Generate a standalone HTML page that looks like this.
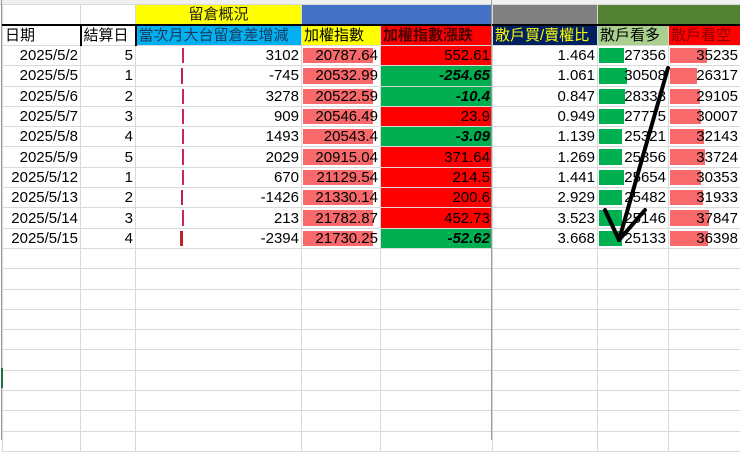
<!DOCTYPE html><html><head><meta charset="utf-8"><style>
body{margin:0;width:740px;height:440px;overflow:hidden;background:#fff;font-family:"Liberation Sans","Noto Sans CJK TC",sans-serif;position:relative}
table{position:absolute;left:2px;top:4px;border-collapse:collapse;table-layout:fixed;width:738px}
td{border:1px solid #d9d9d9;padding:0 2px;height:19px;font-size:15px;white-space:nowrap;overflow:hidden;position:relative;text-align:right;line-height:19px}
tr.d td{height:19.3px}
.h td{text-align:left;font-size:15px}
.bar{position:absolute;left:1px;top:2px;bottom:2px}
.t{position:relative}
i{font-style:italic;font-weight:bold}
</style></head><body>
<div style="position:absolute;left:0;top:0;width:740px;height:4px;background:#f0f0f0;border-bottom:1px solid #ccc"></div>
<table>
<colgroup><col style="width:78px"><col style="width:55px"><col style="width:166px"><col style="width:79px"><col style="width:112px"><col style="width:105px"><col style="width:71px"><col style="width:72px"></colgroup>
<tr class="h"><td></td><td></td><td style="background:#ffff00;text-align:center;color:#222">留倉概況</td><td colspan="2" style="background:#4472c4"></td><td style="background:#808080"></td><td colspan="2" style="background:#548235"></td></tr>
<tr class="h" style="border-top:2px solid #000"><td style="border-right:2px solid #000;border-top:2px solid #000">日期</td><td style="border-right:2px solid #000;border-top:2px solid #000">結算日</td><td style="background:#00b0f0;color:#1a3a5a;border-top:2px solid #000">當次月大台留倉差增減</td><td style="background:#ffff00;border-top:2px solid #000">加權指數</td><td style="background:#ff0000;color:#400;font-weight:bold;border-top:2px solid #000">加權指數漲跌</td><td style="background:#002060;color:#ffff00;border-top:2px solid #000">散戶買/賣權比</td><td style="background:#a9d08e;border-top:2px solid #000">散戶看多</td><td style="background:#ff0000;color:#800;border-top:2px solid #000">散戶看空</td></tr>
<tr class="d"><td>2025/5/2</td><td>5</td><td><div class="bar" style="left:46px;width:2px;background:#d0206a"></div>3102</td><td><div class="bar" style="width:70px;background:#f8696b"></div><span class="t">20787.64</span></td><td style="background:#ff0000">552.61</td><td>1.464</td><td><div class="bar" style="width:25px;background:#00b050"></div><span class="t">27356</span></td><td><div class="bar" style="width:37px;background:#f8696b"></div><span class="t">35235</span></td></tr>
<tr class="d"><td>2025/5/5</td><td>1</td><td><div class="bar" style="left:45px;width:2px;background:#c0204a"></div>-745</td><td><div class="bar" style="width:70px;background:#f8696b"></div><span class="t">20532.99</span></td><td style="background:#00b050"><i>-254.65</i></td><td>1.061</td><td><div class="bar" style="width:28px;background:#00b050"></div><span class="t">30508</span></td><td><div class="bar" style="width:27px;background:#f8696b"></div><span class="t">26317</span></td></tr>
<tr class="d"><td>2025/5/6</td><td>2</td><td><div class="bar" style="left:46px;width:2px;background:#d0206a"></div>3278</td><td><div class="bar" style="width:70px;background:#f8696b"></div><span class="t">20522.59</span></td><td style="background:#00b050"><i>-10.4</i></td><td>0.847</td><td><div class="bar" style="width:26px;background:#00b050"></div><span class="t">28333</span></td><td><div class="bar" style="width:30px;background:#f8696b"></div><span class="t">29105</span></td></tr>
<tr class="d"><td>2025/5/7</td><td>3</td><td><div class="bar" style="left:46px;width:2px;background:#d0206a"></div>909</td><td><div class="bar" style="width:70px;background:#f8696b"></div><span class="t">20546.49</span></td><td style="background:#ff0000">23.9</td><td>0.949</td><td><div class="bar" style="width:25px;background:#00b050"></div><span class="t">27775</span></td><td><div class="bar" style="width:31px;background:#f8696b"></div><span class="t">30007</span></td></tr>
<tr class="d"><td>2025/5/8</td><td>4</td><td><div class="bar" style="left:46px;width:2px;background:#d0206a"></div>1493</td><td><div class="bar" style="width:70px;background:#f8696b"></div><span class="t">20543.4</span></td><td style="background:#00b050"><i>-3.09</i></td><td>1.139</td><td><div class="bar" style="width:23px;background:#00b050"></div><span class="t">25321</span></td><td><div class="bar" style="width:34px;background:#f8696b"></div><span class="t">32143</span></td></tr>
<tr class="d"><td>2025/5/9</td><td>5</td><td><div class="bar" style="left:46px;width:2px;background:#d0206a"></div>2029</td><td><div class="bar" style="width:70px;background:#f8696b"></div><span class="t">20915.04</span></td><td style="background:#ff0000">371.64</td><td>1.269</td><td><div class="bar" style="width:23px;background:#00b050"></div><span class="t">25356</span></td><td><div class="bar" style="width:35px;background:#f8696b"></div><span class="t">33724</span></td></tr>
<tr class="d"><td>2025/5/12</td><td>1</td><td><div class="bar" style="left:46px;width:2px;background:#d0206a"></div>670</td><td><div class="bar" style="width:70px;background:#f8696b"></div><span class="t">21129.54</span></td><td style="background:#ff0000">214.5</td><td>1.441</td><td><div class="bar" style="width:25px;background:#00b050"></div><span class="t">25654</span></td><td><div class="bar" style="width:31px;background:#f8696b"></div><span class="t">30353</span></td></tr>
<tr class="d"><td>2025/5/13</td><td>2</td><td><div class="bar" style="left:45px;width:2px;background:#c0204a"></div>-1426</td><td><div class="bar" style="width:70px;background:#f8696b"></div><span class="t">21330.14</span></td><td style="background:#ff0000">200.6</td><td>2.929</td><td><div class="bar" style="width:23px;background:#00b050"></div><span class="t">25482</span></td><td><div class="bar" style="width:33px;background:#f8696b"></div><span class="t">31933</span></td></tr>
<tr class="d"><td>2025/5/14</td><td>3</td><td><div class="bar" style="left:46px;width:2px;background:#d0206a"></div>213</td><td><div class="bar" style="width:70px;background:#f8696b"></div><span class="t">21782.87</span></td><td style="background:#ff0000">452.73</td><td>3.523</td><td><div class="bar" style="width:23px;background:#00b050"></div><span class="t">25146</span></td><td><div class="bar" style="width:39px;background:#f8696b"></div><span class="t">37847</span></td></tr>
<tr class="d"><td>2025/5/15</td><td>4</td><td><div class="bar" style="left:44px;width:3px;background:#c0202a"></div>-2394</td><td><div class="bar" style="width:70px;background:#f8696b"></div><span class="t">21730.25</span></td><td style="background:#00b050"><i>-52.62</i></td><td>3.668</td><td><div class="bar" style="width:23px;background:#00b050"></div><span class="t">25133</span></td><td><div class="bar" style="width:38px;background:#f8696b"></div><span class="t">36398</span></td></tr>
<tr class="d"><td></td><td></td><td></td><td></td><td></td><td></td><td></td><td></td></tr>
<tr class="d"><td></td><td></td><td></td><td></td><td></td><td></td><td></td><td></td></tr>
<tr class="d"><td></td><td></td><td></td><td></td><td></td><td></td><td></td><td></td></tr>
<tr class="d"><td></td><td></td><td></td><td></td><td></td><td></td><td></td><td></td></tr>
<tr class="d"><td></td><td></td><td></td><td></td><td></td><td></td><td></td><td></td></tr>
<tr class="d"><td></td><td></td><td></td><td></td><td></td><td></td><td></td><td></td></tr>
<tr class="d"><td></td><td></td><td></td><td></td><td></td><td></td><td></td><td></td></tr>
<tr class="d"><td></td><td></td><td></td><td></td><td></td><td></td><td></td><td></td></tr>
<tr class="d"><td></td><td></td><td></td><td></td><td></td><td></td><td></td><td></td></tr>
<tr class="d"><td></td><td></td><td></td><td></td><td></td><td></td><td></td><td></td></tr>
</table>
<div style="position:absolute;left:491px;top:0;width:1px;height:440px;background:#999"></div>
<div style="position:absolute;left:1px;top:0;width:1px;height:440px;background:#999"></div>
<div style="position:absolute;left:1px;top:368px;width:2px;height:20px;background:#217346"></div>
<svg style="position:absolute;left:0;top:0" width="740" height="440"><g stroke="#000" stroke-width="4" fill="none" stroke-linecap="round" stroke-linejoin="round"><path d="M668 68 L619 240"/><path d="M605 210 L619 240 L645 210"/></g></svg>
</body></html>
